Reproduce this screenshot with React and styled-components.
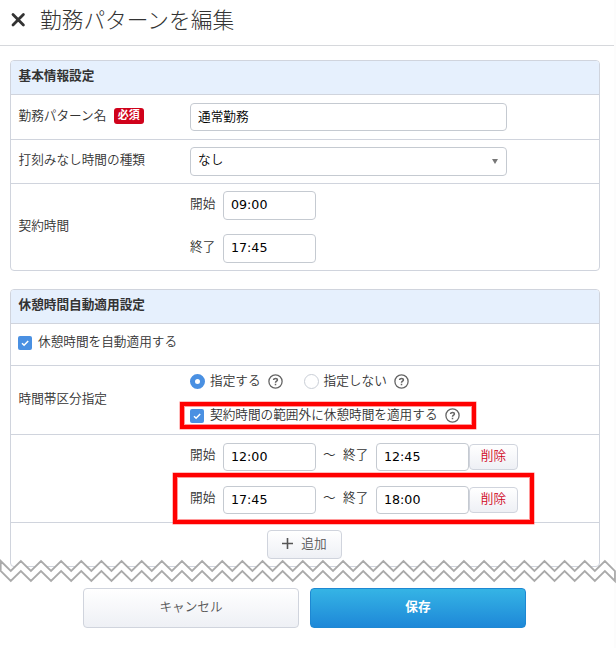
import React, { useState } from 'react';
import styled, { createGlobalStyle, css } from 'styled-components';

const GlobalStyle = createGlobalStyle`
  * {
    box-sizing: border-box;
  }
  body {
    margin: 0;
    background-color: #fff;
    color: #333;
    font-family: 'DejaVu Sans', 'Noto Sans CJK JP', sans-serif;
    font-size: 12.65px;
    font-weight: 350;
    line-height: 18px;
  }
  input, button {
    font: inherit;
  }
`;

const Page = styled.div`
  position: relative;
  width: 616px;
  height: 648px;
  overflow: hidden;
  background: linear-gradient(to right, #fff 614px, #fcfcfc 614px);
`;

const Header = styled.header`
  display: flex;
  align-items: center;
  width: 614px;
  height: 46px;
  padding: 0 0 4px 10px;
  border-bottom: 1px solid #d6d8dc;
`;

const CloseButton = styled.button`
  display: flex;
  padding: 0;
  margin: 0 13px 2px 0;
  border: 0;
  background: none;
`;

const Title = styled.h1`
  margin: 0;
  font-size: 21.7px;
  font-weight: 300;
  line-height: 30px;
  white-space: nowrap;
`;

const Panel = styled.section`
  width: 590px;
  margin: ${props => props.$top}px 0 0 10px;
  border: 1px solid #d0d4dd;
  border-radius: 4px;
  overflow: hidden;
`;

const PanelTitle = styled.h2`
  height: 33px;
  margin: 0;
  padding: 6px 7.5px;
  background-color: #e6f0fd;
  font-size: 12.65px;
  font-weight: 700;
  line-height: 18px;
`;

const Row = styled.div`
  display: flex;
  align-items: center;
  justify-content: ${props => (props.$center ? 'center' : 'flex-start')};
  height: ${props => props.$height}px;
  border-top: 1px solid #d0d4dd;
`;

const Label = styled.div`
  display: flex;
  align-items: center;
  flex: 0 0 179px;
  padding: 0 0 3px 7.5px;
  white-space: nowrap;
`;

const Required = styled.span`
  height: 16px;
  margin: 1px 0 0 7.5px;
  padding: 0 4px;
  border-radius: 3px;
  background-color: #d0021b;
  color: #fff;
  font-size: 11px;
  font-weight: 700;
  line-height: 15px;
`;

const Fields = styled.div`
  display: flex;
  flex-direction: column;
  gap: ${props => props.$gap || 0}px;
  padding-bottom: ${props => props.$bottom || 0}px;
`;

const Line = styled.div`
  display: flex;
  align-items: center;
  white-space: nowrap;
`;

const control = css`
  border: 1px solid #c5cad1;
  border-radius: 4px;
  background-color: #fff;
  color: #000;
  outline: none;
`;

const NameInput = styled.input`
  ${control}
  width: 317px;
  height: 28px;
  padding: 0 7px 3px;
`;

const Select = styled.div`
  ${control}
  display: flex;
  align-items: center;
  justify-content: space-between;
  width: 317px;
  height: 29px;
  padding: 0 8px 3px 7px;
`;

const Arrow = styled.span`
  margin-top: 3px;
  border: 3.5px solid transparent;
  border-top: 5px solid #777;
  border-bottom: 0;
`;

const TimeInput = styled.input`
  ${control}
  width: 93px;
  height: ${props => props.$height || 29}px;
  padding: 0 7px 2px;
  font-weight: 400;
`;

const TimeLabel = styled.span`
  width: 33px;
  padding-bottom: 4px;
`;

const Tilde = styled.span`
  width: 27px;
  padding: 0 0 4px 7px;
`;

const button = css`
  display: flex;
  align-items: center;
  justify-content: center;
  border: 1px solid #d0d4dd;
  border-radius: 4px;
  background: linear-gradient(#fff, #eef0f5);
  color: #555;
`;

const DeleteButton = styled.button`
  ${button}
  width: 49px;
  height: 26px;
  padding: 0 0 3px;
  color: #d0021b;
`;

const AddButton = styled.button`
  ${button}
  gap: 8px;
  width: 75px;
  height: 29px;
  margin-right: 1px;
  padding: 0 0 2px;
`;

const Choice = styled.label`
  display: flex;
  align-items: center;
  margin: 0 0 ${props => props.$bottom || 0}px ${props => props.$left || 0}px;

  span {
    margin: 0 7px 0 5px;
    padding-bottom: 2px;
  }
`;

const CheckBox = styled.i`
  display: flex;
  align-items: center;
  justify-content: center;
  width: 14px;
  height: 14px;
  margin-right: 1px;
  border-radius: 2px;
  background-color: #4a90e2;
`;

const Radio = styled.i`
  width: 15px;
  height: 15px;
  border: ${props => (props.$on ? '5px solid #4a90e2' : '1px solid #c9ced6')};
  border-radius: 50%;
  background-color: #fff;
`;

// red marker laid over the fields it points out
const Marker = styled.div`
  position: absolute;
  top: ${props => props.$top}px;
  left: ${props => props.$left}px;
  width: ${props => props.$width}px;
  height: ${props => props.$height}px;
  border: 4px solid #f00;
  box-shadow: 0 0 0 0.5px rgba(255, 0, 0, 0.5), inset 0 0 0 1px rgba(255, 0, 0, 0.4);
  pointer-events: none;
`;

const Tear = styled.svg`
  position: absolute;
  top: 556px;
  left: 0;
`;

const Footer = styled.footer`
  display: flex;
  gap: 11px;
  padding: 21px 0 0 83px;
`;

const FooterButton = styled.button`
  ${button}
  width: 216px;
  height: 40px;
  padding: 0 0 3px;
  ${props => props.$primary && css`
    border-color: #1e88d2;
    background: linear-gradient(#35b4e5, #1e88d8);
    color: #fff;
    font-weight: 700;
  `}
`;

const Check = () => (
  <CheckBox>
    <svg width="14" height="14" viewBox="0 0 14 14" fill="none" stroke="#fff" strokeWidth="1.5">
      <path d="M4 7.2 6.1 9.3 10.2 5" />
    </svg>
  </CheckBox>
);

const Help = () => (
  <svg width="15" height="15" viewBox="0 0 15 15" fill="none" stroke="#666">
    <circle cx="7.5" cy="7.5" r="6.6" strokeWidth="1.3" />
    <path d="M5.6 6.1C5.6 3.8 9.4 3.9 9.4 6 9.4 7.3 7.5 7.2 7.5 8.8M7.5 9.8v1.5" strokeWidth="1.5" />
  </svg>
);

const zigzag = (y, reverse) => {
  const points = [];
  for (let i = 0; i <= 61; i++) {
    points.push(`${(0.7 + i * 10.07).toFixed(2)},${i % 2 ? y + 10 : y}`);
  }
  return (reverse ? points.reverse() : points).join(' ');
};

function TimeRange({ start, end }) {
  return (
    <Line>
      <TimeLabel>開始</TimeLabel>
      <TimeInput $height={28} defaultValue={start} />
      <Tilde>～</Tilde>
      <TimeLabel>終了</TimeLabel>
      <TimeInput $height={28} defaultValue={end} />
      <DeleteButton>削除</DeleteButton>
    </Line>
  );
}

function App() {
  const [name, setName] = useState('通常勤務');

  return (
    <Page>
      <GlobalStyle />
      <Header>
        <CloseButton>
          <svg width="17" height="17" viewBox="0 0 17 17" stroke="#333" strokeWidth="2.8" strokeLinecap="round">
            <path d="M3 3.5 13.4 13.9M13.4 3.5 3 13.9" />
          </svg>
        </CloseButton>
        <Title>勤務パターンを編集</Title>
      </Header>

      <Panel $top={14}>
        <PanelTitle>基本情報設定</PanelTitle>
        <Row $height={45}>
          <Label>勤務パターン名<Required>必須</Required></Label>
          <NameInput value={name} onChange={e => setName(e.target.value)} />
        </Row>
        <Row $height={44}>
          <Label>打刻みなし時間の種類</Label>
          <Select>なし<Arrow /></Select>
        </Row>
        <Row $height={87}>
          <Label>契約時間</Label>
          <Fields $gap={14}>
            <Line><TimeLabel>開始</TimeLabel><TimeInput defaultValue="09:00" /></Line>
            <Line><TimeLabel>終了</TimeLabel><TimeInput defaultValue="17:45" /></Line>
          </Fields>
        </Row>
      </Panel>

      <Panel $top={18}>
        <PanelTitle>休憩時間自動適用設定</PanelTitle>
        <Row $height={42}>
          <Choice $left={7} $bottom={3}><Check /><span>休憩時間を自動適用する</span></Choice>
        </Row>
        <Row $height={69}>
          <Label>時間帯区分指定</Label>
          <Fields $gap={14} $bottom={3}>
            <Line>
              <Choice><Radio $on /><span>指定する</span></Choice>
              <Help />
              <Choice $left={21}><Radio /><span>指定しない</span></Choice>
              <Help />
            </Line>
            <Line>
              <Choice><Check /><span>契約時間の範囲外に休憩時間を適用する</span></Choice>
              <Help />
            </Line>
          </Fields>
        </Row>
        <Row $height={88}>
          <Label />
          <Fields $gap={15}>
            <TimeRange start="12:00" end="12:45" />
            <TimeRange start="17:45" end="18:00" />
          </Fields>
        </Row>
        <Row $height={44} $center>
          <AddButton>
            <svg width="11" height="11" stroke="#555" strokeWidth="1.6"><path d="M5.5 0v11M0 5.5h11" /></svg>
            追加
          </AddButton>
        </Row>
      </Panel>

      <Footer>
        <FooterButton>キャンセル</FooterButton>
        <FooterButton $primary>保存</FooterButton>
      </Footer>

      <Marker $top={402} $left={180} $width={296} $height={27} />
      <Marker $top={473} $left={173} $width={361} $height={51} />
      <Tear width="616" height="30">
        <polygon points={`${zigzag(5)} ${zigzag(15, true)}`} fill="#fff" stroke="#aaa" strokeWidth="1.8" />
      </Tear>
    </Page>
  );
}

export default App;
